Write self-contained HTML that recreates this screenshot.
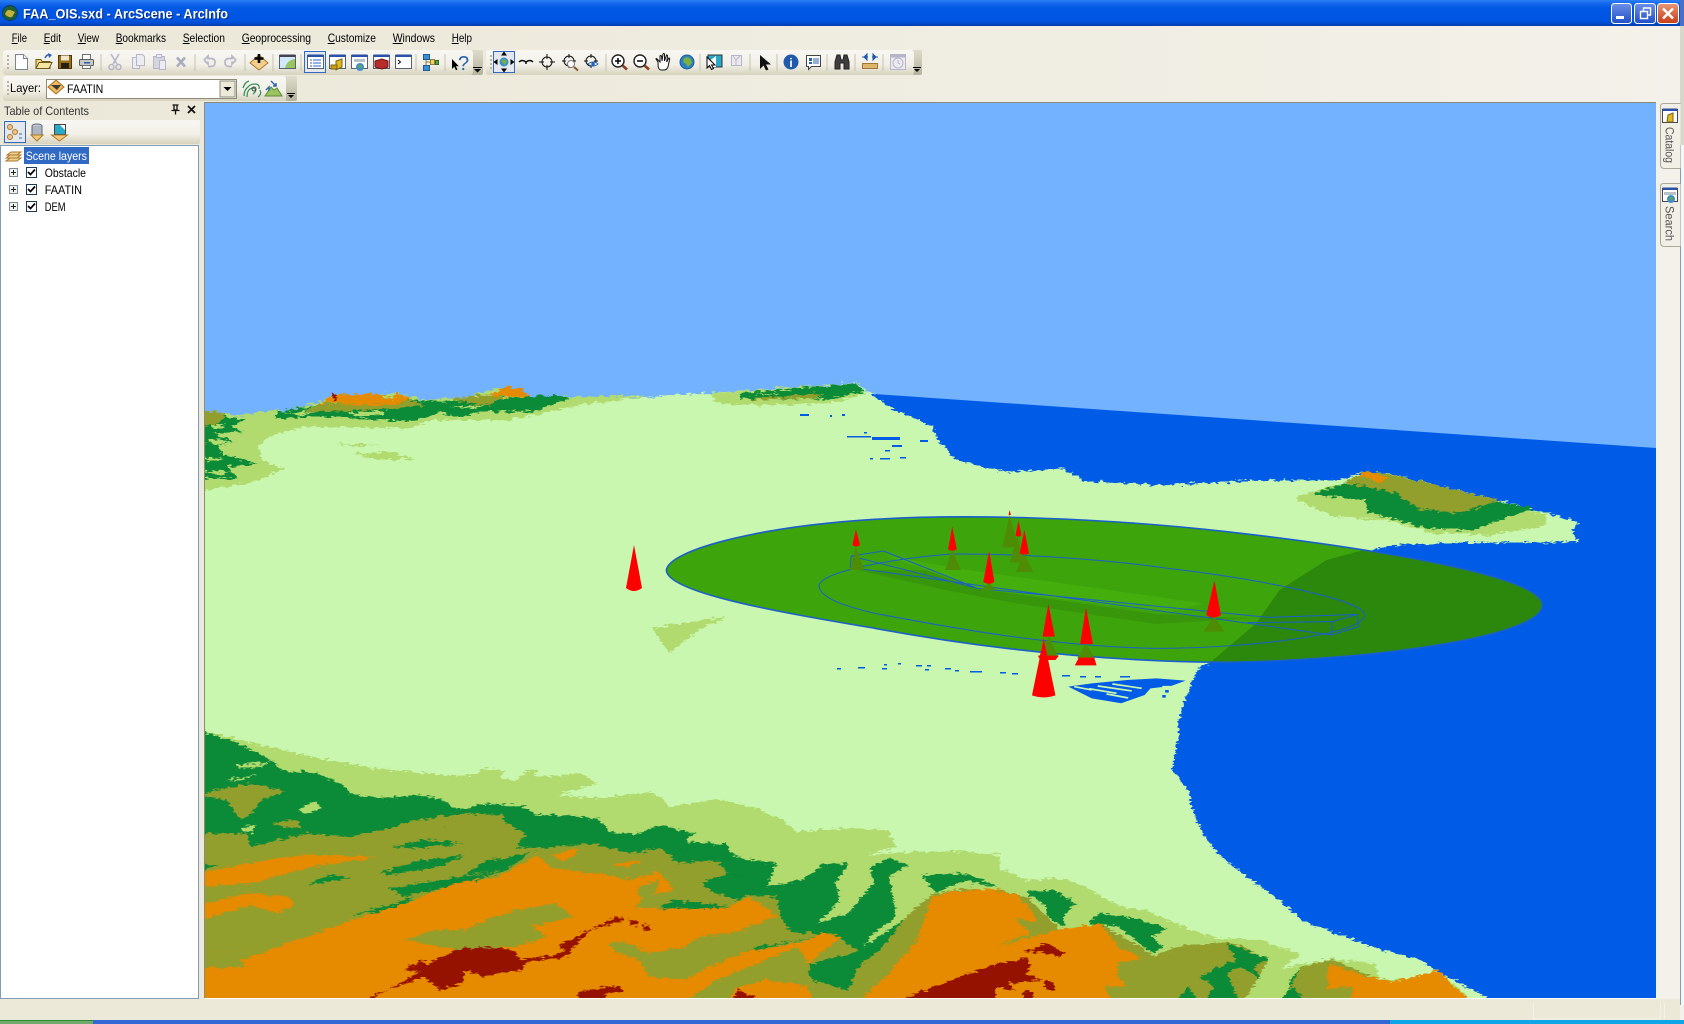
<!DOCTYPE html>
<html><head><meta charset="utf-8"><title>FAA_OIS.sxd - ArcScene - ArcInfo</title>
<style>html,body{margin:0;padding:0;width:1684px;height:1024px;overflow:hidden;background:#ECE9D8}svg{display:block}text{font-family:"Liberation Sans",sans-serif;font-size:12px;fill:#000}</style></head>
<body>
<svg width="1684" height="1024" viewBox="0 0 1684 1024" xmlns="http://www.w3.org/2000/svg">
<defs>
<linearGradient id="tb" x1="0" y1="0" x2="0" y2="1"><stop offset="0" stop-color="#2A7FF5"/><stop offset=".12" stop-color="#1A6AEC"/><stop offset=".3" stop-color="#0058E4"/><stop offset=".8" stop-color="#0055E2"/><stop offset=".92" stop-color="#0049C8"/><stop offset="1" stop-color="#003BA8"/></linearGradient>
<linearGradient id="bg" x1="0" y1="0" x2="1" y2="0"><stop offset="0" stop-color="#EBE8D8"/><stop offset="1" stop-color="#F3F1E9"/></linearGradient>
<linearGradient id="band" x1="0" y1="0" x2="0" y2="1"><stop offset="0" stop-color="#F8F7F3"/><stop offset=".6" stop-color="#F1EFE6"/><stop offset="1" stop-color="#D6D3BE"/></linearGradient>
<linearGradient id="end" x1="0" y1="0" x2="0" y2="1"><stop offset="0" stop-color="#DFDCCB"/><stop offset="1" stop-color="#B5B29E"/></linearGradient>
<linearGradient id="btnb" x1="0" y1="0" x2="0" y2="1"><stop offset="0" stop-color="#6C90E8"/><stop offset="1" stop-color="#1F4FC8"/></linearGradient>
<linearGradient id="btnr" x1="0" y1="0" x2="0" y2="1"><stop offset="0" stop-color="#E89878"/><stop offset="1" stop-color="#C83C14"/></linearGradient>
<clipPath id="sc"><rect x="205" y="103" width="1451" height="895"/></clipPath>
<filter id="j" filterUnits="userSpaceOnUse" x="0" y="0" width="1684" height="1024" color-interpolation-filters="sRGB"><feTurbulence type="fractalNoise" baseFrequency=".16 .42" numOctaves="2" seed="4"/><feDisplacementMap in="SourceGraphic" scale="8" xChannelSelector="R" yChannelSelector="G"/></filter>
<clipPath id="oval"><path transform="translate(640 490) scale(.5868 .3333)" d="M45,240C50,180 200,110 400,88C560,70 800,85 1000,125C1200,165 1538,250 1538,345C1538,440 1250,510 1000,517C800,515 600,480 400,415C250,370 45,310 45,240Z"/></clipPath>
</defs>

<!-- chrome base -->
<rect width="1684" height="1024" fill="url(#bg)"/>
<rect x="1680" y="26" width="4" height="120" fill="#D8D7CC"/><rect x="1680" y="0" width="4" height="26" fill="#4A6FC8"/><rect x="1681" y="145" width="3" height="860" fill="#F6F6F2"/><rect x="1680" y="145" width="1" height="860" fill="#7F9DB9"/>
<rect x="0" y="0" width="1680" height="26" fill="url(#tb)"/>

<!-- scene -->
<rect x="204" y="102" width="1452" height="1" fill="#8C8A78"/>
<rect x="204" y="102" width="1" height="896" fill="#8C8A78"/>
<g clip-path="url(#sc)">
<rect x="205" y="103" width="1451" height="895" fill="#73B2FE"/>
<path d="M860,393L1656,448V1010H205V420Z" fill="#005CE6"/>
<g filter="url(#j)">
<path d="M190,413L240,418L300,408L400,400L646,397L709,393L856,383L870,393L891,408L934,427L938,440L956,460L1004,472L1063,469L1085,481L1160,485L1246,481L1340,480L1363,472L1387,473L1500,500L1547,513L1580,523L1572,530L1578,542L1467,543L1393,545L1385,547L1326,560L1279,590L1255,640L1209,663L1197,670L1185,700L1179,720L1177,743L1172,770L1188,790L1192,807L1201,830L1218,853L1244,875L1279,900L1305,922L1375,948L1419,960L1458,983L1489,998L1495,1015H190Z" fill="#C9F7B0"/>
</g>
<!-- far terrain -->
<g filter="url(#j)">
<g transform="translate(200 370) scale(.4464 .3333)">
<path fill="#B1DB6E" d="M0,118L60,130L80,140L130,125L200,120L270,95L300,75L400,75L450,70L500,90L600,80L680,52L730,80L830,80L1000,78L830,110L750,135L690,150L520,150L470,175L240,170L160,195L130,230L140,270L190,295L150,320L110,340L0,362Z"/>
<path fill="#B1DB6E" d="M300,220L400,225L360,230ZM340,250L420,245L485,265L430,272L370,262ZM1140,70L1350,50L1475,40L1490,70L1430,95L1300,105L1220,105L1160,100Z"/>
<path fill="#0B8A38" d="M0,118L60,140L100,150L70,170L100,185L30,190L75,215L40,225L50,255L135,280L60,290L85,325L0,325ZM170,125L290,100L470,90L540,95L800,75L830,85L745,125L620,125L580,145L540,125L470,155L400,150L290,140L170,145ZM1210,70L1380,50L1470,40L1490,65L1400,90L1210,85Z"/>
<path fill="#B1DB6E" d="M20,165L60,160L40,180ZM20,205L70,215L30,225ZM0,260L50,265L20,275ZM0,300L70,305L40,315ZM180,130L260,125L220,137ZM330,130L420,122L400,135L350,140ZM560,110L640,105L610,118ZM1240,72L1300,68L1280,75ZM1310,85L1400,82L1360,90Z"/>
<path fill="#939F2C" d="M0,118L60,130L40,160L0,170ZM230,125L270,100L450,85L500,105L430,115L300,125ZM560,85L640,75L680,80L650,105L600,100ZM1230,85L1400,70L1380,82L1240,90ZM0,210L20,215L0,235Z"/>
<path fill="#E68A00" d="M265,105L300,75L400,72L430,88L440,70L470,80L475,88L440,105L340,105L300,95ZM650,75L680,52L715,55L740,80L670,80Z"/>
<path fill="#961200" d="M295,72H305V80H295ZM298,80H305V90H298Z"/>
</g>
<g transform="translate(640 490) scale(.5868 .3333)"><path fill="#B1DB6E" d="M20,415L150,378L100,420L50,490L35,450Z"/></g>
<g transform="translate(1200 440) scale(.3333)">
<path fill="#B1DB6E" d="M290,170L420,130L900,190L1040,225L1030,260L870,285L700,280L560,240L400,230L290,180Z"/>
<path fill="#0B8A38" d="M335,165L430,130L900,185L1000,205L860,255L820,270L680,265L500,215L495,180L350,165Z"/>
<path fill="#939F2C" d="M430,130L490,95L560,100L900,180L780,220L650,205L590,160L500,140Z"/>
<path fill="#E68A00" d="M470,105L500,93L570,115L545,128L505,115Z"/>
</g>
</g>
<!-- near blue specks -->
<g fill="#005CE6">
<path d="M800,414h9v2h-9zM830,415h2v2h-2zM842,414h3v2h-3zM847,436h24v1.500h-24zM864,432h3v1.500h-3zM872,437h28v3h-28zM892,445h10v2h-10zM885,450h5v1.500h-5zM870,458h3v1.500h-3zM880,458h10v1.500h-10zM900,457h6v1.500h-6zM920,440h8v2h-8zM905,409h20v6h-20zM920,415h18v6h-18z"/>
<path d="M837,668h4v1.500h-4zM858,667h7v1.500h-7zM882,668h5v1.500h-5zM884,664h3v1.500h-3zM898,663h3v1.500h-3zM916,665h6v1.500h-6zM927,665h4v1.500h-4zM925,669h4v1.500h-4zM945,668h6v1.500h-6zM955,670h4v1.500h-4zM970,671h12v1.500h-12zM1000,672h6v1.500h-6zM1012,673h6v1.500h-6zM1040,674h8v1.500h-8zM1062,675h8v1.500h-8zM1080,676h6v1.500h-6zM1095,676h6v1.500h-6zM1120,676h10v1.500h-10z"/>
</g>
<g transform="translate(640 490) scale(.5868 .3333)">
<path fill="#005CE6" d="M730,590L770,580L830,570L880,565L930,572L905,588L870,595L860,615L820,640L770,625Z"/>
<path fill="#005CE6" d="M940,572h15v8h-15zM965,575h15v8h-15zM895,600h6v8h-6zM890,615h6v8h-6z"/>
<path stroke="#C9F7B0" stroke-width="5" fill="none" d="M765,596L812,610M780,588L838,603M805,582L855,595M795,612L832,624M740,590L770,600M890,590L905,590"/>
</g>
<!-- near terrain -->
<g filter="url(#j)">
<g transform="translate(200 720) scale(.5102 .3333)">
<path fill="#B1DB6E" d="M-10,25L90,65L150,85L250,120L340,145L420,155L470,165L540,165L555,145L600,150L590,175L620,185L640,150L665,150L650,170L720,165L750,160L775,190L735,210L700,225L780,235L880,218L910,235L915,260L1020,238L1090,265L1140,300L1170,335L1240,325L1350,330L1365,380L1310,405L1400,395L1500,395L1568,405V860H-10Z"/>
</g>
<g transform="translate(1000 720) scale(.4363 .3333)">
<path fill="#B1DB6E" d="M-10,440L60,480L150,475L210,510L270,555L340,575L400,610L440,630L500,655L600,660L690,705L640,745L760,718L860,730L870,775L1040,790L1090,860H-10Z"/>
</g>
<g transform="translate(200 720) scale(.5102 .3333)">
<path fill="#0B8A38" d="M-10,25L70,65L100,90L145,125L160,150L230,160L280,195L295,222L360,235L430,225L475,240L505,268L560,252L630,258L660,285L720,285L780,297L810,340L860,340L900,315L970,340L950,365L1005,370L1040,400L1060,415L1130,430L1110,500L1180,480L1225,430L1270,432L1245,490L1255,540L1210,610L1270,580L1320,490L1315,440L1350,415L1390,435L1350,470L1365,590L1320,640L1290,700L1280,810L1100,860H-10Z"/>
<path fill="#0B8A38" d="M1415,465L1500,462L1568,500L1540,495L1500,480L1440,520Z"/>
<path fill="#B1DB6E" d="M190,270L225,245L240,265L205,280ZM75,325L110,315L105,335L85,335ZM70,135L140,125L120,140L80,145ZM1255,470L1285,475L1275,480ZM320,345L380,325L350,345ZM50,180L110,165L80,182Z"/>
<path fill="#939F2C" d="M-10,225L100,190L170,215L120,240L105,275L80,300L50,240ZM140,310L190,300L200,325L165,320ZM440,295L520,280L590,285L530,315L470,320ZM590,335L620,330L630,350L610,355Z"/>
<path fill="#939F2C" d="M-10,340L90,340L100,380L210,340L300,350L370,325L420,300L470,300L480,320L590,285L600,310L640,340L620,380L660,385L770,370L840,400L905,385L940,430L1010,420L1050,480L1020,520L1050,540L1075,525L1130,530L1140,600L1160,640L1240,640L1290,690L1350,640L1430,525L1500,505L1540,510L1568,505V860H-10Z"/>
<path fill="#0B8A38" d="M350,460L420,425L520,405L470,440L370,465ZM520,465L560,420L600,415L650,395L600,450ZM370,505L430,490L600,450L540,480L400,530ZM210,495L250,465L300,475L250,485ZM300,585L370,555L420,530L380,570ZM900,565L930,540L1040,560L1000,570ZM975,720L1130,670L1230,645L1130,675L985,735ZM1170,750L1220,720L1280,700L1340,640L1380,600L1340,680L1290,740L1270,810L1200,780ZM375,380L440,360L520,370L420,385ZM-10,430L40,435L-10,460ZM940,390L1030,370L1040,400L960,420ZM980,490L1040,460L1110,490L1060,530L1010,520Z"/>
<path fill="#E68A00" d="M-10,460L150,415L210,405L350,410L240,435L170,460L100,490L-10,500ZM-10,560L90,520L175,530L185,555L150,580L100,555L-10,605ZM690,405L735,385L740,400L710,425ZM810,430L870,420L850,435L820,440Z"/>
<path fill="#E68A00" d="M-10,700L140,688L190,660L300,600L420,540L500,490L585,470L660,405L690,445L800,465L840,480L900,455L930,510L870,530L850,565L1030,565L1075,530L1135,590L1060,625L1090,640L1000,650L1040,700L1180,670L1220,640L1260,650L1200,720L1175,800L1205,860H-10Z"/>
<path fill="#E68A00" d="M1280,860L1350,760L1410,640L1435,530L1470,515L1568,505V860Z"/>
<path fill="#939F2C" d="M400,660L460,630L520,630L560,600L620,570L700,550L730,590L650,620L680,650L620,680L500,690L440,670ZM800,670L830,665L880,700L950,680L980,650L1130,620L1170,640L1120,660L1080,690L1000,740L950,780L880,770L860,720L820,700ZM940,860L1000,790L1110,720L1170,680L1195,740L1200,790L1260,810L1280,860ZM-10,700L140,688L80,720L90,745L-10,740ZM860,500L900,480L890,530L860,530Z"/>
<path fill="#E68A00" d="M1050,805L1110,780L1190,795L1205,860H1030Z"/>
<path fill="#939F2C" d="M1350,720L1420,640L1370,720L1310,740Z"/>
<path fill="#961200" d="M310,860L430,755L400,750L430,725L450,730L500,690L560,680L610,690L630,720L700,705L715,690L700,680L750,640L810,595L830,590L825,605L770,625L745,660L720,710L640,725L630,750L580,760L550,770L520,750L515,790L470,810L440,770L340,825ZM840,600L855,598L860,615L845,615ZM865,615L880,615L885,632L870,632ZM740,815L820,797L830,815L795,820L795,860H750ZM1035,860L1055,808L1120,860ZM1340,860L1490,770L1568,730V860Z"/>
</g>
<g transform="translate(1000 720) scale(.4363 .3333)">
<path fill="#939F2C" d="M-10,510L60,530L140,630L230,610L355,708L420,675L520,668L560,680L615,720L590,780L550,860H-10Z"/>
<path fill="#0B8A38" d="M60,515L120,510L175,550L150,580L145,620L110,590L105,560ZM200,610L225,580L290,590L385,625L345,650L375,680L350,700L270,620ZM520,670L615,715L580,740L600,780L550,740L520,760L555,860H390L430,800L465,860L490,800L455,770L540,720Z"/>
<path fill="#E68A00" d="M-10,515L40,525L70,570L85,610L30,590L70,640L-10,680ZM-10,680L130,630L230,610L270,680L330,715L270,730L270,770L290,800L240,800L260,860H-10Z"/>
<path fill="#939F2C" d="M640,860L690,740L760,718L850,770L900,790L900,860Z"/>
<path fill="#0B8A38" d="M640,860L690,740L660,790L715,860Z"/>
<path fill="#E68A00" d="M755,730L840,770L905,785L1005,750L1050,810L1090,860H800L810,800L750,810Z"/>
<path fill="#961200" d="M55,695L110,670L150,700L130,710L100,695ZM-10,730L60,715L70,740L60,760L95,780L20,790L35,815L-10,800ZM100,785H120L125,810H105ZM55,815H75L85,860H50Z"/>
</g>
</g>
<!-- oval surface -->
<g clip-path="url(#oval)">
<rect x="640" y="500" width="920" height="180" fill="#3EA40C"/>
<g transform="translate(640 490) scale(.5868 .3333)">
<path fill="#2B880D" d="M1265,165L1170,210L1090,300L1050,400L970,520H1560V165Z"/>
<path fill="#38960A" d="M370,240L520,240L570,295L880,372L1040,385L880,402L640,340L520,300Z"/>
<path fill="#43AE0C" d="M415,195L575,295L900,368L960,340L540,235Z"/>
</g>
</g>
<g transform="translate(640 490) scale(.5868 .3333)" fill="none" stroke="#1A5FCC" stroke-width="1">
<path vector-effect="non-scaling-stroke" stroke-width="1.600" d="M45,240C50,180 200,110 400,88C560,70 800,85 1000,125C1200,165 1538,250 1538,345C1538,440 1250,510 1000,517C800,515 600,480 400,415C250,370 45,310 45,240Z"/>
<path vector-effect="non-scaling-stroke" d="M305,285C315,240 440,205 530,192C650,190 800,210 900,235C1050,265 1235,330 1235,375C1235,430 1050,475 880,475C700,470 520,410 400,370C340,345 305,320 305,285Z"/>
<path vector-effect="non-scaling-stroke" d="M360,198L415,183L575,295L1070,382M360,198L575,295M358,232L1178,435M360,198L358,232M1178,435L1180,395L1222,373L1225,410L1178,435M1180,395L1035,398M1222,373L1070,382"/>
</g>
<!-- cones -->
<g transform="translate(640 490) scale(.5868 .3333)">
<g fill="#4F8C05">
<path d="M368,170L358,240H382ZM532,180L520,240H547ZM630,75L617,172H645ZM643,140L630,218H655ZM655,190L640,246H670ZM595,280L580,300H607ZM978,380L960,425H996ZM697,440L680,500H713ZM760,460L745,505H775Z"/>
</g>
<g fill="#FF0000">
<path d="M368,118L362,165Q368,175 375,165ZM532,110L525,178Q532,186 540,178ZM630,60L628,75H632ZM645,92L640,136Q645,144 650,136ZM655,120L647,190Q655,198 663,190ZM595,183L585,275Q595,288 604,275ZM979,272L965,375Q977,390 990,375ZM696,342L686,440H707ZM760,353L750,462H772Z"/>
<path d="M748,503H774L778,526H741Z"/>
<path d="M678,497H714L708,510H682Z"/>
<path d="M688,445L668,616Q688,628 708,616Z"/>
</g>
</g>
<path d="M634,545L626,588Q634,594 642,588Z" fill="#FF0000"/>
</g>
<rect x="205" y="998" width="1451" height="1" fill="#FFFFFF"/>

<!-- title -->
<circle cx="10" cy="13" r="7.500" fill="#1D5F34"/><path d="M5,14q2-5 5-4t5 2l-3 5q-4 1-7-3" fill="#C4B23C"/><circle cx="10" cy="13" r="7.500" fill="none" stroke="#0B3A70"/>
<text x="23" y="18.500" font-weight="bold" textLength="205" lengthAdjust="spacingAndGlyphs" style="font-size:14px;fill:#0A2A80" dx="1" dy="1">FAA_OIS.sxd - ArcScene - ArcInfo</text>
<text x="23" y="18.500" font-weight="bold" textLength="205" lengthAdjust="spacingAndGlyphs" style="font-size:14px;fill:#fff">FAA_OIS.sxd - ArcScene - ArcInfo</text>
<rect x="1611.500" y="3.500" width="20" height="20" rx="3" fill="url(#btnb)" stroke="#fff"/><rect x="1616" y="16" width="8" height="3" fill="#fff"/>
<rect x="1634.500" y="3.500" width="21" height="20" rx="3" fill="url(#btnb)" stroke="#fff"/><path d="M1640.500,11.500h7v7h-7zM1643.500,11v-3h7v7h-3" fill="none" stroke="#fff" stroke-width="1.400"/>
<rect x="1657.500" y="3.500" width="21" height="20" rx="3" fill="url(#btnr)" stroke="#fff"/><path d="M1663,8.500l10,10M1673,8.500l-10,10" stroke="#fff" stroke-width="2.400"/>

<!-- menu -->
<g style="fill:#000">
<text x="11.700" y="42" textLength="15.300" lengthAdjust="spacingAndGlyphs">File</text>
<text x="43.700" y="42" textLength="17.300" lengthAdjust="spacingAndGlyphs">Edit</text>
<text x="77.700" y="42" textLength="21.300" lengthAdjust="spacingAndGlyphs">View</text>
<text x="115.700" y="42" textLength="50.300" lengthAdjust="spacingAndGlyphs">Bookmarks</text>
<text x="182.700" y="42" textLength="42.300" lengthAdjust="spacingAndGlyphs">Selection</text>
<text x="241.700" y="42" textLength="69.300" lengthAdjust="spacingAndGlyphs">Geoprocessing</text>
<text x="327.700" y="42" textLength="48.300" lengthAdjust="spacingAndGlyphs">Customize</text>
<text x="392.700" y="42" textLength="42.300" lengthAdjust="spacingAndGlyphs">Windows</text>
<text x="451.700" y="42" textLength="20.300" lengthAdjust="spacingAndGlyphs">Help</text>
</g>
<path stroke="#000" d="M11.700,43.500h6M43.700,43.500h6M77.700,43.500h8M115.700,43.500h7M182.700,43.500h7M241.700,43.500h8M327.700,43.500h7M392.700,43.500h10M451.700,43.500h7"/>

<!-- toolbar bands -->
<rect x="470" y="50" width="13" height="25" rx="2" fill="url(#end)"/>
<rect x="3" y="50" width="470" height="25" rx="3" fill="url(#band)"/>
<rect x="285" y="76" width="12" height="25" rx="2" fill="url(#end)"/>
<rect x="3" y="76" width="283" height="25" rx="3" fill="url(#band)"/>
<rect x="912" y="50" width="10" height="25" rx="2" fill="url(#end)"/>
<rect x="486" y="50" width="428" height="25" rx="3" fill="url(#band)"/>
<g fill="#B8B59F"><path d="M7,55h2v2H7zM7,59h2v2H7zM7,63h2v2H7zM7,67h2v2H7zM7,81h2v2H7zM7,85h2v2H7zM7,89h2v2H7zM7,93h2v2H7zM490,55h2v2h-2zM490,59h2v2h-2zM490,63h2v2h-2zM490,67h2v2h-2z"/></g>
<path stroke="#C6C3B0" d="M101,54v17M195,54v17M245,54v17M273,54v17M301,54v17M416,54v17M445,54v17M606,54v17M700,54v17M750,54v17M777,54v17M827,54v17M855,54v17M883,54v17"/>
<path fill="#000" d="M473,67h9v1h-9zM474,69h7l-3.500,3.500zM913,67h8v1h-8zM914,69h6l-3,3zM287,93h8v1h-8zM288,95h6l-3,3z"/>

<!-- selected buttons -->
<rect x="304.500" y="51.500" width="21" height="21" fill="#E4E8EC" stroke="#316AC5"/>
<rect x="493.500" y="51.500" width="21" height="21" fill="#E4E8EC" stroke="#316AC5"/>

<!-- toolbar1 icons -->
<path d="M15.500,54.500h8l4,4v11h-12z" fill="#fff" stroke="#7B8591"/><path d="M23.500,54.500v4h4" fill="#E8EBEF" stroke="#7B8591"/>
<path d="M36,68.500v-9h5l1,2h8v7z" fill="#F0D883" stroke="#6F5A1C"/><path d="M36,68.500l3-6h13l-3,6z" fill="#F6E6A2" stroke="#6F5A1C"/><path d="M45,58q2-4 5-3" fill="none" stroke="#2A5EB0" stroke-width="1.500"/><path d="M48,53l4,2l-3,3z" fill="#2A5EB0"/>
<rect x="58.500" y="55.500" width="13" height="13" fill="#9A6E16" stroke="#4D3808"/><rect x="61" y="55.500" width="8" height="5" fill="#EFE7CF"/><rect x="61" y="63" width="8" height="5.500" fill="#262012"/>
<path d="M82.500,54.500h8v5h-8z" fill="#fff" stroke="#6C7070"/><rect x="79.500" y="59.500" width="14" height="6" rx="1" fill="#C8C8C4" stroke="#5C5C58"/><path d="M82.500,65.500h8v3h-8z" fill="#fff" stroke="#6C7070"/><rect x="84" y="62" width="6" height="1.500" fill="#2A5EB0"/>
<g fill="none" stroke="#B6B6C8" stroke-width="1.600"><path d="M111,54l6,10M119,54l-6,10"/><circle cx="111.500" cy="67" r="2.500"/><circle cx="118.500" cy="67" r="2.500"/></g>
<g fill="#ECECF2" stroke="#B6B6C8"><path d="M132.500,57.500h7v11h-7z"/><path d="M136.500,54.500h6l2,2v9h-8z"/></g>
<g fill="#ECECF2" stroke="#B6B6C8"><path d="M153.500,56.500h11v12h-11z" fill="#D6D6E0"/><path d="M159.500,60.500h6v9h-6z"/><rect x="156.500" y="54.500" width="5" height="3"/></g>
<path d="M177,57.500l8,9M185,57.500l-8,9" stroke="#A9ACBE" stroke-width="2.600"/>
<path d="M204,60l4-4v2.500h3q4,0 4,4t-4,4h-3M204,60l4,4v-2.500" fill="none" stroke="#B6B6C8" stroke-width="1.700"/>
<path d="M236,60l-4-4v2.500h-3q-4,0-4,4t4,4h3M236,60l-4,4v-2.500" fill="none" stroke="#B6B6C8" stroke-width="1.700"/>
<path d="M259,55l9,8l-9,7l-9-7z" fill="#F4CE8C" stroke="#A87A2C"/><path d="M259,54v9M254.500,58.500h9" stroke="#000" stroke-width="2.600"/>
<rect x="279.500" y="55.500" width="16" height="13" fill="#CFE8FA" stroke="#556070"/><rect x="279.500" y="54.500" width="16" height="2.500" fill="#445"/><path d="M285,68q2-8 10-9v9z" fill="#9AC461"/>
<rect x="307.500" y="55.500" width="16" height="13" fill="#fff" stroke="#556070"/><rect x="307.500" y="54.500" width="16" height="2.500" fill="#2A50A8"/><path d="M310,60h2M313,60h8M310,63h2M313,63h8M310,66h2M313,66h8" stroke="#2A62C8"/>
<rect x="329.500" y="55.500" width="16" height="13" fill="#fff" stroke="#556070"/><rect x="329.500" y="54.500" width="16" height="2.500" fill="#2A50A8"/><path d="M336,61l6-2v8l-6,3z" fill="#E0B820" stroke="#7A6410"/><rect x="331" y="65" width="6" height="4" fill="#C8A018" stroke="#7A6410"/>
<rect x="351.500" y="55.500" width="16" height="13" fill="#fff" stroke="#556070"/><rect x="351.500" y="54.500" width="16" height="2.500" fill="#2A50A8"/><rect x="354" y="59" width="11" height="3" fill="#B9C0C8"/><circle cx="360" cy="67" r="4" fill="#3F8FC8"/><path d="M358,66q2-2 4,0l-1,3z" fill="#69A83A"/>
<rect x="373.500" y="55.500" width="16" height="13" fill="#fff" stroke="#556070"/><rect x="373.500" y="54.500" width="16" height="2.500" fill="#2A50A8"/><path d="M375,61l7-2l6,2v6l-6,2l-7-2z" fill="#B92C2C" stroke="#6E1212"/>
<rect x="395.500" y="55.500" width="16" height="13" fill="#fff" stroke="#556070"/><rect x="395.500" y="54.500" width="16" height="2.500" fill="#2A50A8"/><path d="M398,60l2.500,2l-2.500,2" fill="none" stroke="#000"/>
<path d="M426,58v9M426,62h10" stroke="#8E7E38"/><rect x="423.500" y="54.500" width="6" height="5" fill="#3A8FD0" stroke="#1F5A98"/><rect x="423.500" y="65.500" width="6" height="5" fill="#3A8FD0" stroke="#1F5A98"/><rect x="430.500" y="59.500" width="4" height="5" fill="#F0D060" stroke="#8E7E38"/><rect x="435.500" y="60.500" width="3" height="4" fill="#55A840" stroke="#2F6A28"/>
<path d="M452,59v10l2.300-2.300l1.700,3.500l1.500-.8l-1.700-3.200h3z" fill="#000"/><text x="458" y="70" style="font-size:20px;fill:#2A62B0">?</text>

<!-- layer toolbar -->
<text x="10" y="92" textLength="31" lengthAdjust="spacingAndGlyphs">Layer:</text>
<rect x="46.500" y="79.500" width="190" height="19" fill="#fff" stroke="#8E8B78"/>
<rect x="220" y="81" width="15" height="16" fill="#ECE9D8" stroke="#8E8B78"/><path d="M223.500,87h8l-4,4z" fill="#000"/>
<path d="M56,80l8,7l-8,7l-8-7z" fill="#F2B860" stroke="#A47020"/><path d="M51,85h10l-4,5z" fill="#3A3A3A"/>
<text x="67" y="93" textLength="36.300" lengthAdjust="spacingAndGlyphs">FAATIN</text>
<g fill="none" stroke="#2F8F58" stroke-width="1.200"><path d="M244,96q0-6 4-9q2-3 7-3t4,5M247,97q0-6 3-8q3-2 5,0t-2,5M258,97q4-3 2-7M243,88q2-6 6-7"/></g><circle cx="254" cy="89" r="2" fill="none" stroke="#444"/>
<path d="M265,96l6-9l3,3l3-2l5,8z" fill="#9AC461" stroke="#5E8A30"/><path d="M271,81l5,5M276,83v3h-3M266,90l3,-3v4" fill="none" stroke="#2A62B0" stroke-width="1.400"/>

<!-- toolbar2 icons -->
<circle cx="504" cy="62" r="4.500" fill="#3A8FC8"/><path d="M501,61q3-3 6,0l-2,4z" fill="#7BB13C"/><path d="M504,51.500l-3,4h6zM504,72.500l-3-4h6zM493.500,62l4-3v6zM514.500,62l-4-3v6z" fill="#000"/>
<path d="M519,62q3-3 7,0q4-3 7,0M526,62v2" fill="none" stroke="#111" stroke-width="1.500"/>
<g fill="none" stroke="#111"><circle cx="547" cy="62" r="5"/><path d="M547,54v5M547,65v5M539,62h5M550,62h5"/></g>
<g fill="none" stroke="#111"><circle cx="569" cy="61" r="5"/><path d="M569,54v4M569,64v4M562,61h4M572,61h4"/></g><circle cx="571" cy="64" r="3.500" fill="#fff" stroke="#777"/><path d="M574,67l4,3.500" stroke="#8A5530" stroke-width="2"/>
<g fill="none" stroke="#111"><circle cx="591" cy="61" r="5"/><path d="M591,54v4M591,64v4M584,61h4M594,61h4"/></g><path d="M588,64q5-4 10,0q-5,4-10,0z" fill="#fff" stroke="#2A62B0"/><circle cx="593" cy="64" r="1.800" fill="#2A62B0"/>
<circle cx="618" cy="61" r="6" fill="#fff" stroke="#222" stroke-width="1.400"/><path d="M615,61h6M618,58v6" stroke="#000" stroke-width="1.500"/><path d="M622.500,65.500l4.500,4" stroke="#8A4020" stroke-width="2.600"/>
<circle cx="640" cy="61" r="6" fill="#fff" stroke="#222" stroke-width="1.400"/><path d="M637,61h6" stroke="#000" stroke-width="1.500"/><path d="M644.500,65.500l4.500,4" stroke="#8A4020" stroke-width="2.600"/>
<path d="M658,62l-2-3q0-1 1,0l3,3l0-6q1-1 1.500,0l.5,5l1-7q1-1 1.500,0l0,7l2-6q1,0 1,1l-.8,6l2-4q1,0 1,1l-1.500,7q-1,4-4,4h-3q-2,0-3-3z" fill="#fff" stroke="#111"/>
<circle cx="687" cy="62" r="7" fill="#2C7FC4" stroke="#1E5E98"/><path d="M684,58q4-2 7,1l1,4l-4,4l-2-3l-3-2z" fill="#78B13C"/>
<rect x="708" y="55" width="14" height="12" fill="#2AA8C8" stroke="#333"/><path d="M708,62l8-6v11h-8z" fill="#fff"/><path d="M707,57v11l2.500-2.500l2,4l2-1l-2-3.500h3.500z" fill="#fff" stroke="#000"/>
<rect x="731.500" y="55.500" width="10" height="10" fill="#ECEAF0" stroke="#B6B6C8"/><path d="M733,56l3,4v5M740,56l-4,4" stroke="#B6B6C8" fill="none"/>
<path d="M760,55v14l3.500-3.500l2.500,5l2.500-1l-2.500-5h5z" fill="#111"/>
<circle cx="791" cy="62" r="7.500" fill="#1F5AAC"/><text x="791" y="67" text-anchor="middle" font-weight="bold" style="font-size:12px;fill:#fff">i</text>
<path d="M806.500,55.500h14v11h-9l-3,3v-3h-2z" fill="#fff" stroke="#444"/><path d="M809,58h3v3h-3zM809,62h3v2h-3z" fill="#2A62B0"/><path d="M813,59h6M813,61h6M813,63h6" stroke="#2A62B0"/>
<path d="M835,62l2-7h3l1,5h2l1-5h3l2,7v7h-5v-6h-4v6h-5z" fill="#3E3E3E" stroke="#222"/>
<path d="M862,57h6M867,54l-3,3l3,3zM872,57h6M873,54l3,3l-3,3z" fill="#1F5AAC" stroke="#1F5AAC"/><rect x="862.500" y="63.500" width="15" height="5" fill="#DDB56C" stroke="#A0773A"/>
<rect x="890.500" y="54.500" width="15" height="15" fill="#ECEAF0" stroke="#B6B6C8"/><rect x="890.500" y="54.500" width="15" height="3" fill="#B6B6C8"/><circle cx="898" cy="63" r="5" fill="#ECEAF0" stroke="#B6B6C8"/><path d="M898,60v3l2,1" stroke="#B6B6C8" fill="none"/>

<!-- TOC -->
<text x="4" y="115" textLength="85" lengthAdjust="spacingAndGlyphs" style="fill:#333">Table of Contents</text>
<path d="M172.500,105h6M174,105v5h3v-5M171.500,110.500h8M175.500,110.500v4" fill="none" stroke="#111" stroke-width="1.300"/>
<path d="M188,106l7,7M195,106l-7,7" stroke="#111" stroke-width="1.800"/>
<rect x="3" y="120" width="197" height="24" rx="2" fill="url(#band)"/>
<rect x="4.500" y="121.500" width="21" height="21" fill="#E4E8EC" stroke="#316AC5"/>
<g><circle cx="10" cy="127" r="2.500" fill="#F0C48C" stroke="#A87A2C"/><circle cx="15" cy="132" r="2.500" fill="#F0C48C" stroke="#A87A2C"/><circle cx="10" cy="137" r="2.500" fill="#F0C48C" stroke="#A87A2C"/><path d="M19,134h3M19,138h3" stroke="#3A6EA8"/></g>
<ellipse cx="37" cy="126" rx="5" ry="2" fill="#C8CCD4" stroke="#5F6876"/><path d="M32,126v9h10v-9" fill="#AEB4C0" stroke="#5F6876"/><path d="M31,135h12l-6,6z" fill="#F4C878" stroke="#A87A2C"/>
<rect x="54.500" y="124.500" width="11" height="10" fill="#2AA8C8" stroke="#444"/><path d="M60,125h5v5z" fill="#fff"/><path d="M51.500,135h16l-8,6z" fill="#F4C878" stroke="#A87A2C"/>
<rect x="0.500" y="145.500" width="198" height="853" fill="#fff" stroke="#7F9DB9"/>
<g fill="#F2CE90" stroke="#A87A2C"><path d="M6,161l4-3h11l-4,3z"/><path d="M6,158l4-3h11l-4,3z"/><path d="M7,155l4-3h10l-4,3z"/></g>
<rect x="24" y="147" width="65" height="17" fill="#316AC5"/>
<text x="25.700" y="160" textLength="61.300" lengthAdjust="spacingAndGlyphs" style="fill:#fff">Scene layers</text>
<g>
<rect x="9.500" y="168.500" width="8" height="8" fill="#F2F2EC" stroke="#7A8A99"/><path d="M11,172.500h5M13.500,170v5" stroke="#222"/>
<rect x="26.500" y="167.500" width="10" height="10" fill="#fff" stroke="#1C3A56"/><path d="M28,172l2.500,2.500l4.500-5" fill="none" stroke="#000" stroke-width="1.700"/>
<rect x="9.500" y="185.500" width="8" height="8" fill="#F2F2EC" stroke="#7A8A99"/><path d="M11,189.500h5M13.500,187v5" stroke="#222"/>
<rect x="26.500" y="184.500" width="10" height="10" fill="#fff" stroke="#1C3A56"/><path d="M28,189l2.500,2.500l4.500-5" fill="none" stroke="#000" stroke-width="1.700"/>
<rect x="9.500" y="202.500" width="8" height="8" fill="#F2F2EC" stroke="#7A8A99"/><path d="M11,206.500h5M13.500,204v5" stroke="#222"/>
<rect x="26.500" y="201.500" width="10" height="10" fill="#fff" stroke="#1C3A56"/><path d="M28,206l2.500,2.500l4.500-5" fill="none" stroke="#000" stroke-width="1.700"/>
</g>
<text x="44.700" y="177" textLength="41.300" lengthAdjust="spacingAndGlyphs">Obstacle</text>
<text x="44.700" y="194" textLength="37.300" lengthAdjust="spacingAndGlyphs">FAATIN</text>
<text x="44.700" y="211" textLength="20.800" lengthAdjust="spacingAndGlyphs">DEM</text>

<!-- right dock tabs -->
<path d="M1680.500,168.500h-16q-4,0-4-4v-58q0-3 3-3h17" fill="#F1EFE6" stroke="#ACA899"/>
<path d="M1680.500,246.500h-16q-4,0-4-4v-56q0-3 3-3h17" fill="#F1EFE6" stroke="#ACA899"/>
<rect x="1662.500" y="109.500" width="15" height="13" fill="#fff" stroke="#445"/><rect x="1662.500" y="108.500" width="15" height="2.500" fill="#2A50A8"/><path d="M1668,115l5-2v9h-6z" fill="#E0B820" stroke="#7A6410"/>
<rect x="1662.500" y="188.500" width="15" height="13" fill="#fff" stroke="#445"/><rect x="1662.500" y="187.500" width="15" height="2.500" fill="#2A50A8"/><rect x="1664" y="192" width="12" height="3" fill="#B9C0C8"/><circle cx="1671" cy="199" r="4" fill="#3F8FC8"/><path d="M1669,198q2-2 4,0l-1,3z" fill="#69A83A"/>
<text transform="translate(1665.500 127) rotate(90)" textLength="36" lengthAdjust="spacingAndGlyphs" style="fill:#555">Catalog</text>
<text transform="translate(1665.500 206) rotate(90)" textLength="35" lengthAdjust="spacingAndGlyphs" style="fill:#555">Search</text>

<!-- status + taskbar -->
<rect x="0" y="999" width="1680" height="21" fill="#ECE9D8"/>
<path d="M1533.500,1003v16h127v-16M1664.500,1003v16" fill="none" stroke="#F4F2E8"/>
<rect x="0" y="1020" width="1684" height="4" fill="#3168D5"/>
<rect x="1390" y="1020" width="294" height="4" fill="#10A5E6"/>
<rect x="0" y="1020" width="93" height="4" fill="#6FA96C"/>
<rect x="0" y="1020" width="93" height="1" fill="#2F8A30"/>
</svg>
</body></html>
